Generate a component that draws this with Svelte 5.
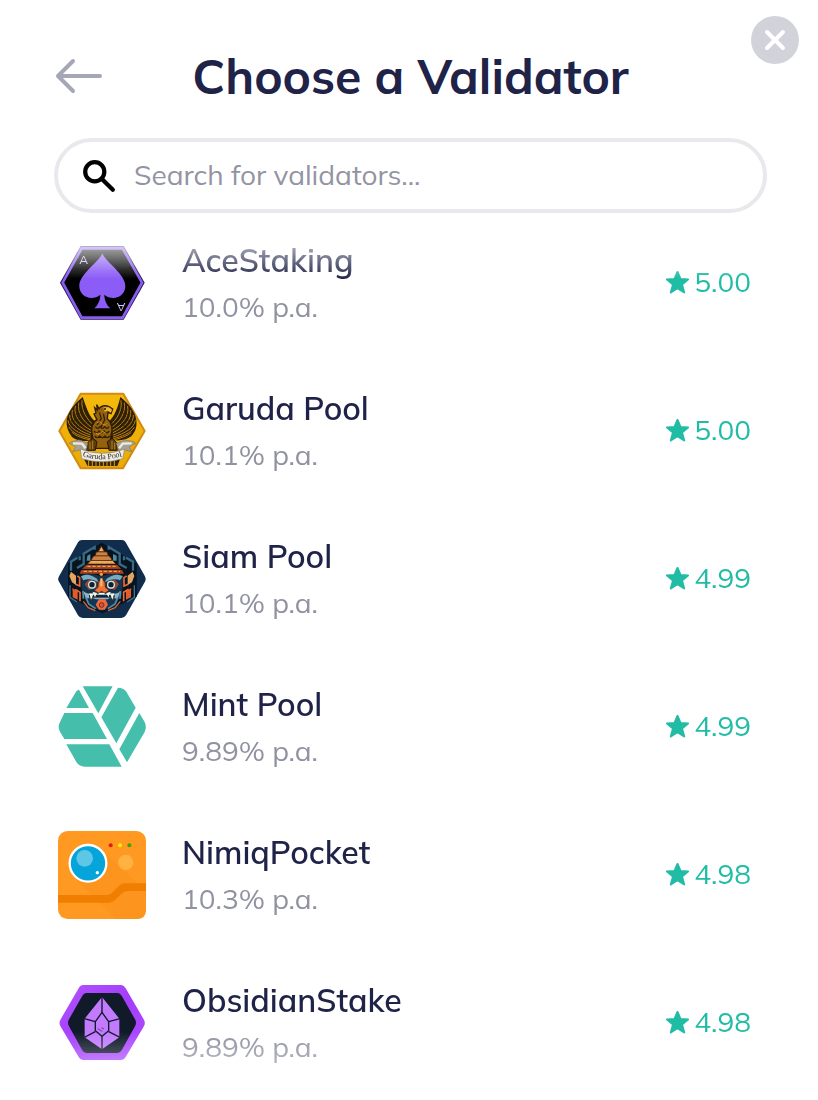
<script lang="ts">
  type Validator = { id: string; name: string; reward: string; score: string };

  const validators: Validator[] = [
    { id: 'ace', name: 'AceStaking', reward: '10.0% p.a.', score: '5.00' },
    { id: 'garuda', name: 'Garuda Pool', reward: '10.1% p.a.', score: '5.00' },
    { id: 'siam', name: 'Siam Pool', reward: '10.1% p.a.', score: '4.99' },
    { id: 'mint', name: 'Mint Pool', reward: '9.89% p.a.', score: '4.99' },
    { id: 'pocket', name: 'NimiqPocket', reward: '10.3% p.a.', score: '4.98' },
    { id: 'obsidian', name: 'ObsidianStake', reward: '9.89% p.a.', score: '4.98' },
  ];

  let query = $state('');
  let visible = $derived(
    validators.filter((v) => v.name.toLowerCase().includes(query.trim().toLowerCase()))
  );
</script>

{#snippet logo(id: string)}
  {#if id === 'ace'}
    <svg class="logo" viewBox="54 27 264 264" aria-hidden="true">
      <defs>
        <linearGradient id="ace-shine" x1="0" y1="0" x2="0" y2="1">
          <stop offset="0" stop-color="#fff" stop-opacity=".15" />
          <stop offset="1" stop-color="#fff" stop-opacity="0" />
        </linearGradient>
      </defs>
      <path d="M122 48H251L314 158 251 269H122L60 158Z" fill="#23104f" />
      <path d="M125 55H248L306 158 248 263H125L68 158Z" fill="#000" stroke="#8a5cf0" stroke-width="8" />
      <path d="M187 70C177 96 118 132 118 168C118 202 157 214 181 194C181 210 174 225 163 235H211C200 225 193 210 193 194C217 214 256 202 256 168C256 132 197 96 187 70Z" fill="#8b5cf6" />
      <path d="M122 48H251L284 106Q187 140 89 106Z" fill="url(#ace-shine)" />
      <text class="ace-letter" x="131" y="101">A</text>
      <text class="ace-letter" x="-243" y="-220" transform="rotate(180)">A</text>
    </svg>
  {:else if id === 'garuda'}
    <svg class="logo" viewBox="54 21 264 264" aria-hidden="true">
      <defs>
        <linearGradient id="garuda-gold" x1="0" y1="0" x2="0" y2="1">
          <stop offset="0" stop-color="#f5b90d" />
          <stop offset="1" stop-color="#eaaa05" />
        </linearGradient>
      </defs>
      <path d="M122 41H250L314 153 249 265H122L58 153Z" fill="url(#garuda-gold)" stroke="#d28b13" stroke-width="6" stroke-linejoin="round" />
      <path d="M132 238H240L232 258H143Z" fill="#352406" />
      <path d="M146 238V258M157 238V262M168 238V262M179 238V262M190 238V262M201 238V262M212 238V262M223 238V262" stroke="#dfa20b" stroke-width="3" />
      <!-- wings -->
      <g fill="#2e1f07">
        <path d="M128 51C139 80 145 111 170 128L163 176C140 188 112 183 96 171C83 154 78 137 80 121C83 95 105 70 128 51Z" />
        <path d="M241 51C234 78 226 109 203 128L209 177C234 186 258 180 274 169C288 153 291 138 289 120C286 96 266 70 241 51Z" />
      </g>
      <g fill="none" stroke="#bd8111" stroke-width="3" stroke-linecap="round">
        <path d="M126 62C122 91 142 119 160 135M116 69C111 99 130 125 156 143M106 79C99 108 122 134 153 151M97 91C91 120 116 142 152 158M89 106C87 128 111 151 151 165M84 122C87 145 116 160 151 171M87 142C99 161 124 169 150 176M96 157C112 171 130 175 151 180" />
        <path d="M243 62C248 91 230 119 211 135M253 69C258 99 240 125 214 143M263 79C269 108 248 134 217 151M272 91C276 120 253 142 219 158M280 106C282 128 259 151 220 165M286 122C282 145 255 160 220 171M283 142C271 161 245 169 220 176M273 158C257 171 239 175 219 180" />
      </g>
      <g fill="none" stroke="#30200a" stroke-width="2">
        <path d="M119 92L130 87M104 105L121 99M93 125L116 117M109 144L131 129M252 92L241 87M267 105L249 99M277 125L254 117M262 144L240 129" />
      </g>
      <!-- body and head -->
      <path d="M177 86C181 77 195 74 207 80L218 87 213 101 204 97 202 116C217 128 219 149 213 166L209 205H161L157 166C151 145 157 126 171 119L162 102 168 99 164 83 172 90 170 74Z" fill="#94610e" stroke="#2d1d07" stroke-width="4" />
      <path d="M190 82L207 82 216 89 213 98 203 92 194 95Z" fill="#f1b733" />
      <circle cx="195" cy="87" r="3" fill="#211607" />
      <path d="M178 97L184 116 171 135M190 101L194 120 183 142M166 140Q173 150 180 140Q187 150 194 140Q201 150 207 140M162 153Q170 164 177 153Q185 164 192 153Q200 164 208 153M164 168Q172 178 179 168Q187 178 195 168Q202 178 209 168" fill="none" stroke="#352208" stroke-width="4" />
      <path d="M170 130Q178 120 185 130T200 130M167 159Q174 168 181 159T197 159" fill="none" stroke="#d59720" stroke-width="3" />
      <path d="M143 188L158 174 171 185 166 211H139ZM202 185L217 174 229 187 232 211H207Z" fill="#5c3d0b" stroke="#241906" stroke-width="3" />
      <path d="M150 185V208M158 182V208M216 182V208M224 188V208" stroke="#b98322" stroke-width="3" />
      <!-- ribbon -->
      <path d="M94 185L117 180 143 190 135 223 119 210 98 215 107 201 88 190ZM280 185L256 180 229 190 239 223 255 210 276 215 268 201 287 190Z" fill="#a8a294" stroke="#817766" stroke-width="2" />
      <path d="M99 190L126 191 137 205M275 190L248 191 237 205" fill="none" stroke="#eeeae0" stroke-width="7" />
      <path d="M121 207Q187 233 254 207L248 236Q187 255 125 236Z" fill="#eeece4" stroke="#8a8272" stroke-width="2" />
      <path id="garuda-ribbon" d="M114 224Q187 252 260 224" fill="none" />
      <text class="ribbon-text"><textPath href="#garuda-ribbon" startOffset="50%">Garuda Pool</textPath></text>
    </svg>
  {:else if id === 'siam'}
    <svg class="logo" viewBox="54 15 264 264" aria-hidden="true">
      <path d="M126 30H246Q253 30 257 37L314 137Q320 147 314 157L258 256Q253 264 244 264H128Q119 264 114 256L58 157Q51 147 58 137L114 37Q118 30 126 30Z" fill="#122c4c" />
      <path d="M185 38L290 100V200L187 250 84 200V100Z" fill="#07131f" />
      <g fill="none" stroke="#356b86" stroke-width="7">
        <path d="M164 59V51L131 71V102L111 114M206 59V51L239 71V102L260 114M112 83L93 95V122M258 83L279 95V122M119 91V79M252 91V79" />
      </g>
      <path d="M142 77L151 72V92H140ZM219 72L230 77V92H219Z" fill="#4d8ba1" />
      <!-- tiered crown -->
      <g fill="#efb35e" stroke="#512312" stroke-width="3">
        <path d="M184 48L194 66H174Z" />
        <path d="M169 66H201L205 78H165Z" />
        <path d="M161 78H208L217 91H153Z" />
        <path d="M153 91H217L229 103H141Z" />
      </g>
      <path d="M139 104H231L244 117H126ZM124 120H246L252 131H119Z" fill="#a8431d" />
      <path d="M142 109H227M131 124H240M151 97H216" stroke="#e5a254" stroke-width="4" stroke-dasharray="10 5" />
      <path d="M158 84H211M168 72H202" stroke="#b44e25" stroke-width="3" />
      <path d="M139 103H231M124 118H246" stroke="#1d1414" stroke-width="3" />
      <!-- ears and side flames -->
      <path d="M93 125L108 137V165L96 157 88 138ZM278 125L263 137V165L276 157 283 138Z" fill="#e3a563" />
      <path d="M97 174L113 184V209L98 202V185ZM274 174L258 184V209L273 202V185Z" fill="#e45b2b" />
      <path d="M112 138L119 143V168L107 163M260 138L252 143V168L265 163M106 178L120 187V214M266 178L251 187V214" fill="none" stroke="#f06a30" stroke-width="5" />
      <path d="M90 166V202L111 216M283 166V202L261 216" fill="none" stroke="#397293" stroke-width="4" />
      <!-- face -->
      <path d="M123 137Q145 124 184 139Q226 124 249 137L246 194 224 228 186 243 148 228 126 194Z" fill="#16344f" />
      <path d="M123 139Q142 126 171 146L176 157Q151 142 130 151ZM248 139Q229 126 200 146L194 157Q221 142 240 151Z" fill="#79aac0" />
      <path d="M134 163L147 148 170 155 170 174 146 179ZM237 163L224 148 201 155 201 174 225 179Z" fill="#8a4a35" />
      <g fill="#092138" stroke="#d5e6df" stroke-width="4">
        <circle cx="156" cy="164" r="10" />
        <circle cx="213" cy="164" r="10" />
      </g>
      <path d="M185 143L195 158 196 172 207 181 195 189 185 184 175 189 163 181 174 172 175 158Z" fill="#ef7335" stroke="#512318" stroke-width="2" />
      <path d="M184 145V169" stroke="#f9bf68" stroke-width="6" />
      <circle cx="184" cy="133" r="5" fill="#f4a22f" />
      <path d="M130 184Q145 197 162 187L176 193H194L208 187Q228 197 241 184L233 207Q210 201 203 208H168Q151 201 138 207Z" fill="#8db6c4" />
      <path d="M147 195H224V203H147Z" fill="#10253a" />
      <path d="M158 186L165 202 171 189ZM212 186L205 202 199 189ZM148 190L153 209 160 193ZM223 190L217 209 211 193Z" fill="#fff6df" />
      <path d="M176 191H194" stroke="#fff6df" stroke-width="5" />
      <path d="M138 203L146 222 167 236M233 203L225 222 204 236M129 183L130 206M241 183L240 206" fill="none" stroke="#568da8" stroke-width="5" />
      <path d="M176 208H196L204 224 194 239H177L167 224Z" fill="#ed693b" />
      <circle cx="185" cy="225" r="7" fill="#dc562e" stroke="#712e26" stroke-width="3" />
      <path d="M130 214L145 233 166 242M241 214L225 233 204 242" fill="none" stroke="#d76735" stroke-width="4" />
    </svg>
  {:else if id === 'mint'}
    <svg class="logo" viewBox="54 24 264 264" aria-hidden="true">
      <g fill="#45beac">
        <path d="M128 34H218L175 115Z" />
        <path d="M117 44L147 99H79L108 50Q111 45 117 44Z" />
        <path d="M234 38Q250 38 259 50L287 98 229 205 184 127Z" />
        <path d="M73 114H158L201 192H73L60 170Q52 157 60 141Z" />
        <path d="M298 114L314 141Q321 155 314 171L261 262 238 223Z" />
        <path d="M79 208H208L245 275H134Q118 275 109 261Z" />
      </g>
    </svg>
  {:else if id === 'pocket'}
    <svg class="logo" viewBox="54 33 264 264" aria-hidden="true">
      <rect x="54" y="33" width="264" height="264" rx="29" fill="#ff9921" />
      <path d="M103 172L228 297H290Q318 297 318 269V214L187 92Z" fill="#fc941d" />
      <path d="M54 225H202Q211 225 219 216L236 199Q244 190 256 190H318V213H263Q252 213 244 221L225 240Q217 248 205 248H54Z" fill="#f07e00" />
      <circle cx="144" cy="130" r="55" fill="#05a5db" stroke="#fff" stroke-width="7" />
      <circle cx="134" cy="115" r="25" fill="#5dc7e5" />
      <circle cx="172" cy="158" r="5" fill="#fff" />
      <circle cx="257" cy="127" r="23" fill="#ffb142" />
      <circle cx="212" cy="76" r="6" fill="#e91b0c" />
      <circle cx="240" cy="76" r="6" fill="#fff000" />
      <circle cx="268" cy="76" r="6" fill="#35a900" />
    </svg>
  {:else}
    <svg class="logo" viewBox="54 12 264 264" aria-hidden="true">
      <defs>
        <linearGradient id="obsidian-rim" x1="0" y1="0" x2="1" y2="1">
          <stop offset="0" stop-color="#b154ff" />
          <stop offset=".5" stop-color="#a43dfc" />
          <stop offset="1" stop-color="#b04eff" />
        </linearGradient>
      </defs>
      <path d="M130 30H243Q251 30 257 40L310 131Q319 144 310 157L257 246Q252 255 242 255H131Q121 255 116 246L63 157Q54 144 63 131L116 40Q121 30 130 30Z" fill="url(#obsidian-rim)" />
      <path d="M139 54H233Q240 54 245 62L285 133Q291 143 285 154L245 226Q240 234 233 234H139Q131 234 127 226L87 154Q81 143 87 133L127 62Q131 54 139 54Z" fill="#101a29" />
      <path d="M186 66L238 131V187L186 223 134 187V131Z" fill="#c27aff" />
      <path d="M186 112L206 140V167L186 184 166 167V140Z" fill="none" stroke="#101a29" stroke-width="4" />
      <path d="M186 64V112M166 140L133 131M206 140L240 131M166 170L133 187M206 170L240 187M186 184V225" stroke="#101a29" stroke-width="4" />
      <path d="M173 161L187 169M184 158L192 162" stroke="#6f3b9f" stroke-width="3" />
      <path d="M180 157L186 160" stroke="#ff675f" stroke-width="2" />
    </svg>
  {/if}
{/snippet}

<main>
  <button class="close" type="button" aria-label="Close">
    <svg viewBox="0 0 48 48" aria-hidden="true">
      <path d="M16 16L32 32M32 16L16 32" />
    </svg>
  </button>

  <header>
    <button class="back" type="button" aria-label="Back">
      <svg viewBox="0 0 48 36" aria-hidden="true">
        <path d="M46 18H4M19 3L4 18L19 33" />
      </svg>
    </button>
    <h1>Choose a Validator</h1>
  </header>

  <label class="search">
    <svg viewBox="0 0 32 32" aria-hidden="true">
      <circle cx="12" cy="12" r="9" />
      <path d="M19 19L29 29" />
    </svg>
    <input type="text" aria-label="Search for validators" placeholder="Search for validators..." bind:value={query} />
  </label>

  <ul>
    {#each visible as validator (validator.id)}
      <li>
        <button class="validator" type="button">
          {@render logo(validator.id)}
          <span class="details">
            <span class="name">{validator.name}</span>
            <span class="reward">{validator.reward}</span>
          </span>
          <span class="score">
            <svg viewBox="0 0 24 24" aria-hidden="true">
              <path d="M12.500 2L15.500 9L23 9.500L17 14.500L19.200 22.500L12.500 18.200L5.800 22.500L8 14.500L2 9.500L9.500 9Z" />
            </svg>
            {validator.score}
          </span>
        </button>
      </li>
    {/each}
  </ul>
</main>

<style>
  :global(body) {
    margin: 0;
    background: #fff;
  }

  main {
    position: relative;
    display: flex;
    flex-direction: column;
    box-sizing: border-box;
    height: 100vh;
    padding: 44px 51px 0 54px;
    overflow: hidden;
    color: #1f2348;
    font-family: Muli, Mulish, Lato, sans-serif;
  }

  button {
    border: 0;
    padding: 0;
    background: none;
    color: inherit;
    font: inherit;
    cursor: pointer;
  }

  svg {
    display: block;
    flex: none;
  }

  .close {
    position: absolute;
    top: 16px;
    right: 19px;
    width: 48px;
    height: 48px;
    border-radius: 50%;
    background: #d2d2da;
  }

  .close path {
    fill: none;
    stroke: #fff;
    stroke-width: 4;
    stroke-linecap: round;
  }

  header {
    display: grid;
    grid-template-columns: 48px 1fr 48px;
    align-items: center;
    margin-bottom: 30px;
  }

  .back svg {
    width: 48px;
    height: 36px;
  }

  .back path {
    fill: none;
    stroke: #a5a7b6;
    stroke-width: 4;
    stroke-linecap: round;
    stroke-linejoin: round;
  }

  h1 {
    margin: 0;
    font-size: 48px;
    font-weight: 700;
    line-height: 64px;
    text-align: center;
    white-space: nowrap;
  }

  .search {
    display: flex;
    align-items: center;
    gap: 18px;
    flex: none;
    box-sizing: border-box;
    height: 75px;
    border: 4px solid #e9e9ed;
    border-radius: 38px;
    padding: 0 24px;
  }

  .search svg {
    width: 34px;
    height: 34px;
    fill: none;
    stroke: #000;
    stroke-width: 4;
    stroke-linecap: round;
  }

  input {
    flex: 1;
    min-width: 0;
    border: 0;
    padding: 0 0 2px;
    outline: none;
    background: none;
    color: inherit;
    font: inherit;
    font-size: 28px;
    line-height: 40px;
  }

  input::placeholder {
    color: #9394a3;
    opacity: 1;
  }

  ul {
    display: flex;
    flex: 1;
    flex-direction: column;
    gap: 60px;
    min-height: 0;
    margin: 0;
    padding: 26px 16px 0 4px;
    overflow: auto;
    list-style: none;
    scrollbar-width: none;
    mask-image: linear-gradient(transparent 12px, #000 66px, #000 calc(100% - 68px), rgb(0 0 0 / 30%));
  }

  .validator {
    display: flex;
    align-items: center;
    gap: 36px;
    width: 100%;
    text-align: left;
  }

  .logo {
    width: 88px;
    height: 88px;
  }

  .details {
    display: grid;
    flex: 1;
    gap: 7px;
    line-height: 40px;
  }

  .name {
    font-size: 32px;
    font-weight: 600;
  }

  .reward {
    color: #9192a1;
    font-size: 28px;
  }

  .score {
    display: flex;
    align-items: center;
    gap: 5px;
    padding-bottom: 2px;
    color: #21bca5;
    font-size: 28px;
    line-height: 40px;
  }

  .score svg {
    width: 24px;
    height: 24px;
    fill: currentColor;
    stroke: currentColor;
    stroke-width: 2;
    stroke-linejoin: round;
  }

  .ace-letter {
    fill: #d8caff;
    font-size: 36px;
    text-anchor: middle;
  }

  .ribbon-text {
    fill: #27231c;
    font-family: "Liberation Serif", serif;
    font-size: 24px;
    text-anchor: middle;
  }
</style>
